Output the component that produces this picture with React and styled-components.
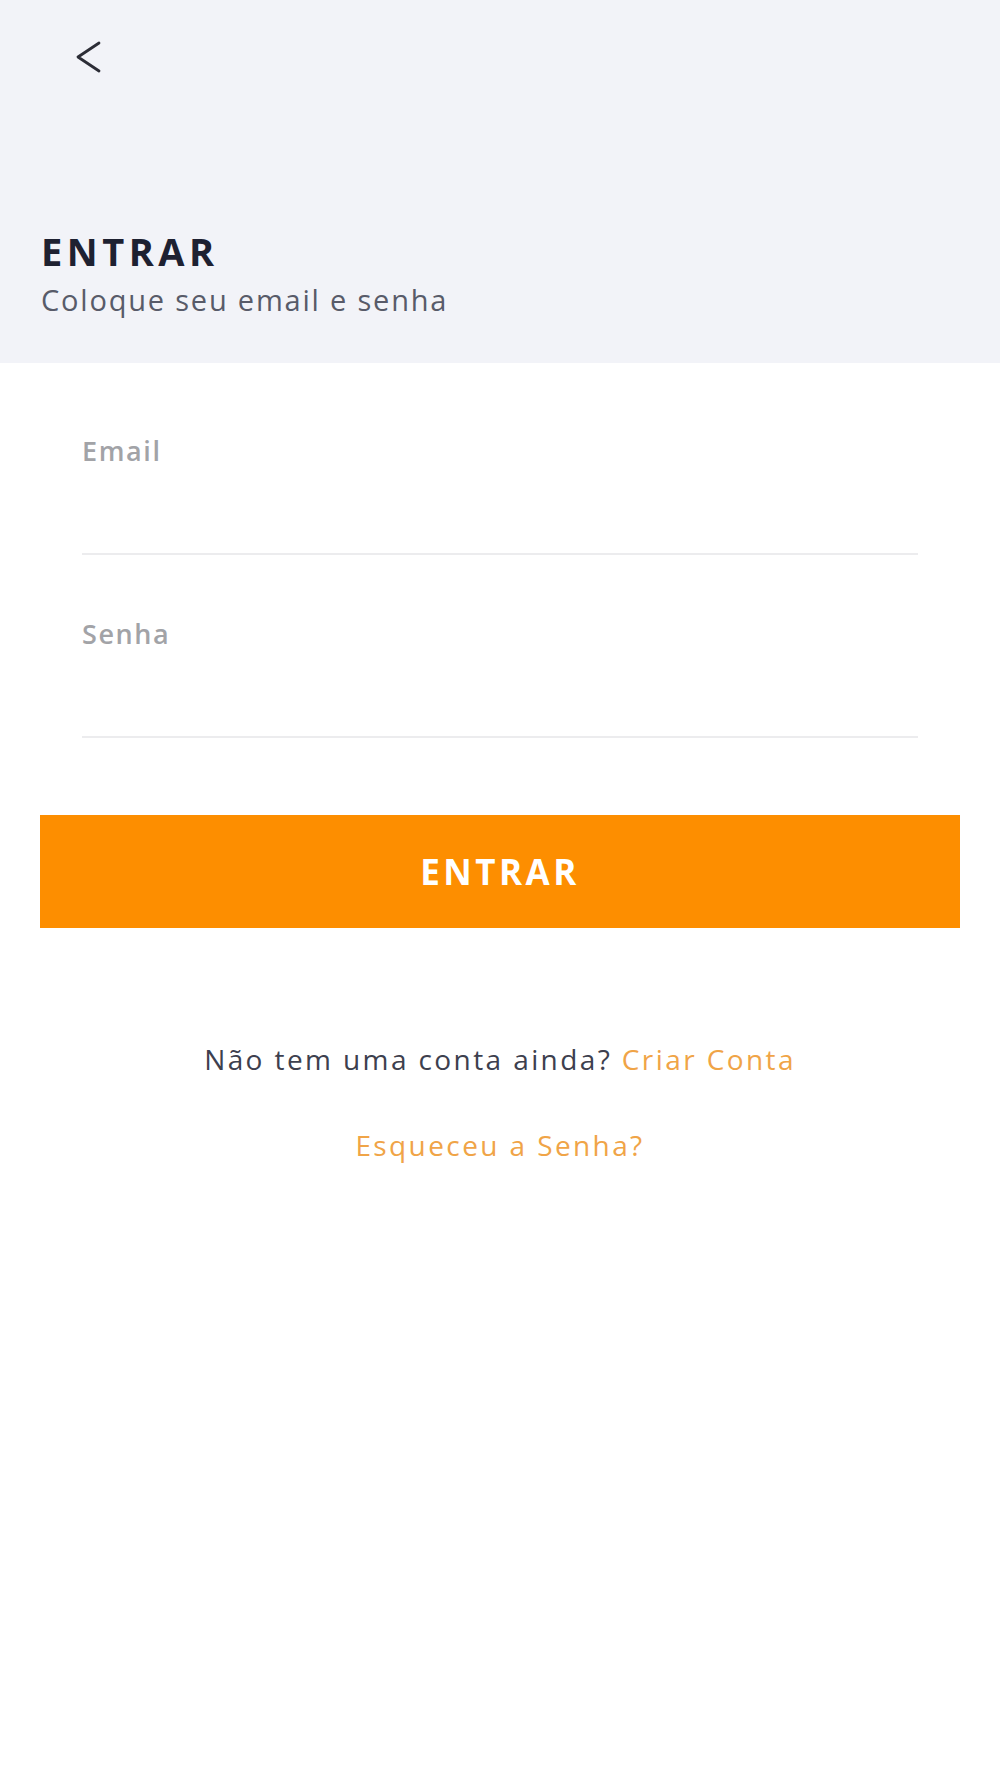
import React from "react";
import styled, { createGlobalStyle } from "styled-components";

const Global = createGlobalStyle`
  html, body { margin: 0; padding: 0; background: #ffffff; }
  body { font-family: "Open Sans", "Noto Sans", sans-serif; }
  * { box-sizing: border-box; }
`;

const Page = styled.div`
  width: 1000px;
  min-height: 1778px;
  background: #ffffff;
  display: flex;
  flex-direction: column;
`;

const Header = styled.header`
  height: 363px;
  background: #f2f3f8;
  padding: 40px 41px 0;
  display: flex;
  flex-direction: column;
  align-items: flex-start;
`;

const BackButton = styled.button`
  margin-left: 34px;
  padding: 0;
  border: none;
  background: transparent;
  width: 26px;
  height: 34px;
  color: #2c2d36;
  display: flex;
  cursor: pointer;
`;

const Title = styled.h1`
  margin: 158px 0 0;
  font-size: 38px;
  line-height: 1;
  font-weight: 700;
  letter-spacing: 4.5px;
  color: #1e2131;
`;

const Subtitle = styled.p`
  margin: 15px 0 0;
  font-size: 29px;
  line-height: 1;
  font-weight: 400;
  letter-spacing: 1.8px;
  color: #585b69;
`;

const Main = styled.main`
  padding: 0 40px;
  display: flex;
  flex-direction: column;
`;

const Fields = styled.div`
  padding: 0 42px;
  display: flex;
  flex-direction: column;
`;

const Field = styled.label`
  display: flex;
  flex-direction: column;
  margin-top: ${(p) => p.$top}px;
`;

const Label = styled.span`
  font-size: 27px;
  line-height: 1;
  font-weight: 600;
  letter-spacing: 1.6px;
  color: #a2a3a7;
`;

const Input = styled.input`
  height: 91px;
  border: none;
  border-bottom: 2px solid #ececee;
  background: transparent;
  outline: none;
  font-family: inherit;
  font-size: 28px;
  padding: 0;
`;

const SubmitButton = styled.button`
  margin-top: 77px;
  height: 113px;
  border: none;
  background: #fd8e00;
  color: #ffffff;
  font-family: "Open Sans", "Noto Sans", sans-serif;
  font-size: 35px;
  font-weight: 700;
  letter-spacing: 3.5px;
  display: flex;
  align-items: center;
  justify-content: center;
  cursor: pointer;
`;

const Links = styled.div`
  display: flex;
  flex-direction: column;
  align-items: center;
  margin-top: 117px;
  gap: 58px;
`;

const Line = styled.p`
  margin: 0;
  font-size: 28px;
  line-height: 1;
  letter-spacing: 2.4px;
  color: #3d404e;
`;

const Link = styled.a`
  color: #f0a447;
  text-decoration: none;
  cursor: pointer;
`;

function ChevronLeft() {
  return (
    <svg width="26" height="34" viewBox="0 0 26 34" fill="none">
      <polyline
        points="24,3 3,17 24,31"
        stroke="currentColor"
        strokeWidth="2.8"
        strokeLinecap="round"
        strokeLinejoin="round"
      />
    </svg>
  );
}

export default function App() {
  return (
    <Page>
      <Global />
      <Header>
        <BackButton aria-label="Voltar">
          <ChevronLeft />
        </BackButton>
        <Title>ENTRAR</Title>
        <Subtitle>Coloque seu email e senha</Subtitle>
      </Header>
      <Main>
        <Fields>
          <Field $top={74}>
            <Label>Email</Label>
            <Input type="email" />
          </Field>
          <Field $top={65}>
            <Label>Senha</Label>
            <Input type="password" />
          </Field>
        </Fields>
        <SubmitButton>ENTRAR</SubmitButton>
        <Links>
          <Line>
            Não tem uma conta ainda? <Link>Criar Conta</Link>
          </Line>
          <Line>
            <Link>Esqueceu a Senha?</Link>
          </Line>
        </Links>
      </Main>
    </Page>
  );
}
